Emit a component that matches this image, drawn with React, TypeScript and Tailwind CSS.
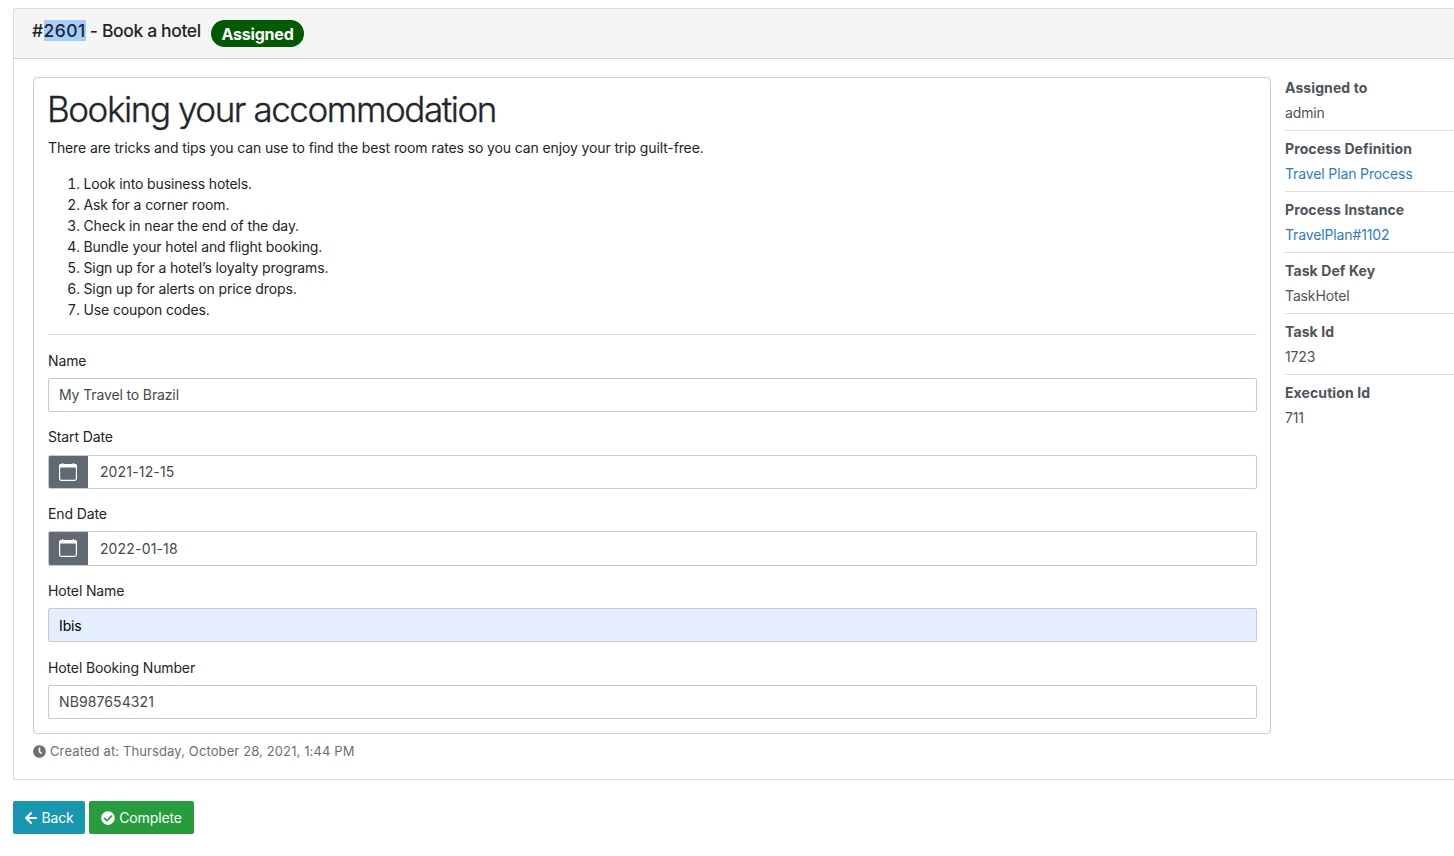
import React from "react";
import { FaArrowLeft, FaCheckCircle, FaClock } from "react-icons/fa";

const tips = [
  "Look into business hotels.",
  "Ask for a corner room.",
  "Check in near the end of the day.",
  "Bundle your hotel and flight booking.",
  "Sign up for a hotel’s loyalty programs.",
  "Sign up for alerts on price drops.",
  "Use coupon codes.",
];

const fields = [
  { label: "Name", value: "My Travel to Brazil", kind: "text" },
  { label: "Start Date", value: "2021-12-15", kind: "date" },
  { label: "End Date", value: "2022-01-18", kind: "date" },
  { label: "Hotel Name", value: "Ibis", kind: "filled" },
  { label: "Hotel Booking Number", value: "NB987654321", kind: "code" },
];

const details = [
  { label: "Assigned to", value: "admin" },
  { label: "Process Definition", value: "Travel Plan Process", link: true },
  { label: "Process Instance", value: "TravelPlan#1102", link: true },
  { label: "Task Def Key", value: "TaskHotel" },
  { label: "Task Id", value: "1723" },
  { label: "Execution Id", value: "711" },
];

const valueStyles: Record<string, string> = {
  text: "pl-[10px] leading-[32px]",
  date: "pl-[11.5px] pt-[0.25px] leading-[32px] tracking-[0.17px]",
  filled: "pl-[10px] leading-[34px]",
  code: "pl-[10px] leading-[32px] tracking-[0.1px]",
};

function CalendarIcon() {
  return (
    <svg width="18" height="18" viewBox="0 0 18 18" fill="none">
      <path d="M3.6 0v2M14.4 0v2" stroke="white" strokeWidth="1.2" />
      <path d="M0 4.5V3a2 2 0 0 1 2-2h14a2 2 0 0 1 2 2v1.5z" fill="white" />
      <rect x="0.6" y="1.6" width="16.8" height="15.8" rx="1.8" stroke="white" strokeWidth="1.2" />
    </svg>
  );
}

function Field({ label, value, kind }: { label: string; value: string; kind: string }) {
  return (
    <div className="h-[76.75px]">
      <div className="mb-[7.2px] h-[21px] leading-[21px]">{label}</div>
      <div
        className={
          "flex h-[34.2px] items-stretch overflow-hidden rounded-[2px] border border-[#c5cad4] " +
          (kind === "filled" ? "bg-[#e5eeff] text-black" : "bg-white text-[#434a51]")
        }
      >
        {kind === "date" && (
          <span className="flex w-[39.4px] items-center justify-center bg-[#616a72] pr-[1.4px] text-white">
            <CalendarIcon />
          </span>
        )}
        <span className={valueStyles[kind]}>{value}</span>
      </div>
    </div>
  );
}

export default function App() {
  return (
    <div className="h-[856px] w-full overflow-hidden bg-white pl-[13px] pt-[8px] font-['Inter',sans-serif] text-[14px] tracking-[-0.13px] text-[#212529]">
      <section className="h-[772px] rounded-l-[2px] border border-r-0 border-[#dcdcdc]">
        <header className="flex h-[50px] items-start border-b border-[#d5d5d5] bg-[#f5f5f5] pl-[18px]">
          <h2 className="mt-[9px] w-[169px] whitespace-nowrap text-[17.5px] font-medium leading-[26px] tracking-[-0.36px]">
            <span className="tracking-[0.4px]">#</span>
            <span className="bg-[#a5cdff] tracking-[0.4px]">2601</span> - Book a hotel
          </h2>
          <span className="ml-[10px] mt-[11px] flex h-[27px] w-[93px] items-center justify-center rounded-full bg-[#005a00] text-[16px] font-bold tracking-[-0.2px] text-white">
            Assigned
          </span>
        </header>
        <div className="flex pl-[19px] pt-[18px]">
          <div className="w-[1238px] shrink-0">
            <div className="h-[657px] rounded-[4px] border border-[#cbced1] pl-[14px] pr-[13px] pt-[10px]">
              <h1 className="-ml-px h-[43px] text-[35px] font-light leading-[43px] tracking-[-1.43px] [-webkit-text-stroke:0.35px_#212529]">
                Booking your accommodation
              </h1>
              <p className="mt-[6px] leading-[21px] tracking-[-0.12px]">
                There are tricks and tips you can use to find the best room rates so you can enjoy your trip guilt-free.
              </p>
              <ol className="mt-[15px] list-decimal pl-[35.5px] leading-[21px] tracking-[-0.12px]">
                {tips.map((t) => (
                  <li key={t}>{t}</li>
                ))}
              </ol>
              <hr className="mb-[14.7px] mt-[14px] border-[#dedfe0]" />
              {fields.map((f) => (
                <Field key={f.label} {...f} />
              ))}
            </div>
            <div className="mt-[7px] flex items-center gap-[4px] text-[13px] leading-[20px] tracking-[0.12px] text-[#6f6f6f]">
              <FaClock size={13} />
              Created at: Thursday, October 28, 2021, 1:44 PM
            </div>
          </div>
          <dl className="ml-[14px] flex grow flex-col gap-[7px] text-[#4d545b]">
            {details.map((d, i) => (
              <div key={d.label} className={"h-[54px] " + (i < 5 ? "border-b border-[#dcdee0]" : "")}>
                <dt className="h-[25px] font-bold leading-[22px] tracking-[0.1px]">{d.label}</dt>
                <dd className={"leading-[22px] " + (d.link ? "text-[#2d7cc9]" : "")}>{d.value}</dd>
              </div>
            ))}
          </dl>
        </div>
      </section>
      <div className="mt-[21px] flex gap-[4px] text-white">
        <button className="flex h-[33px] w-[72px] items-center justify-center gap-[3px] rounded-[2px] bg-[#1797b0]">
          <FaArrowLeft size={14} />
          Back
        </button>
        <button className="flex h-[33px] w-[105px] items-center justify-center gap-[4px] rounded-[2px] bg-[#259d3d]">
          <FaCheckCircle size={14} />
          Complete
        </button>
      </div>
    </div>
  );
}
